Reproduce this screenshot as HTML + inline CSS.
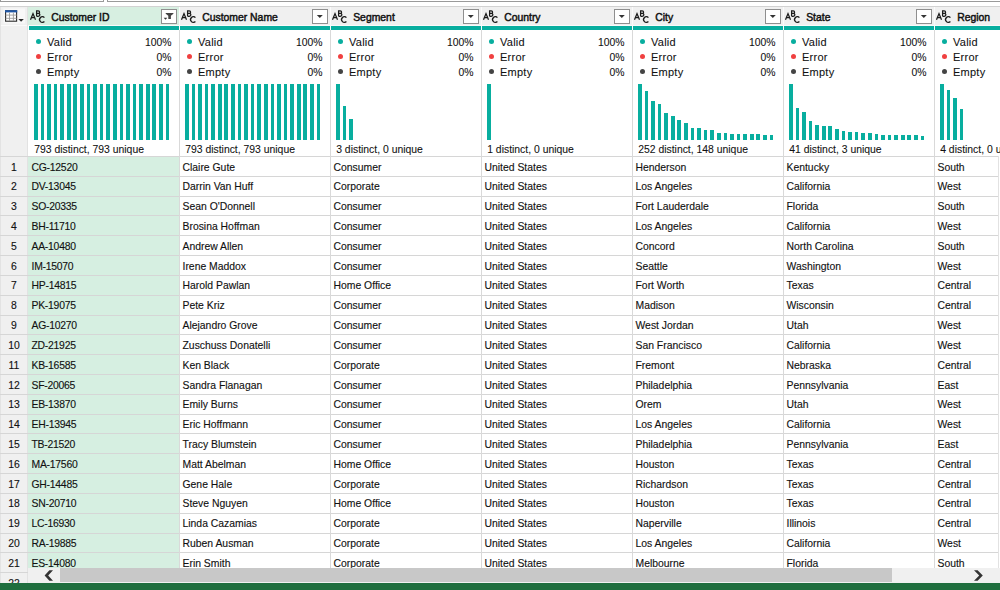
<!DOCTYPE html><html><head><meta charset="utf-8"><style>
*{margin:0;padding:0;box-sizing:border-box}
html,body{width:1000px;height:590px;overflow:hidden;background:#fff;font-family:"Liberation Sans",sans-serif;color:#111}
.a{position:absolute}
.t{position:absolute;white-space:nowrap;font-size:10.4px;line-height:12px;-webkit-text-stroke:0.12px #111}
.h{position:absolute;white-space:nowrap;font-size:10.4px;line-height:12px;color:#111;-webkit-text-stroke:0.45px #111}
.bar{position:absolute;background:#08ae9f}
.dot{position:absolute;width:5px;height:5px;border-radius:50%}
.dd{position:absolute;width:16px;height:15px;border:1px solid #8f8f8f;background:#fff}
</style></head><body>
<div class="a" style="left:0;top:0;width:1000px;height:7px;background:#fff"></div>
<div class="a" style="left:0;top:1px;width:104px;height:1px;background:#9a9a9a"></div>
<div class="a" style="left:103px;top:0;width:1px;height:2px;background:#9a9a9a"></div>
<div class="a" style="left:0;top:0;width:1px;height:2px;background:#9a9a9a"></div>
<div class="a" style="left:107px;top:1px;width:893px;height:1px;background:#9a9a9a"></div>
<div class="a" style="left:107px;top:0;width:1px;height:2px;background:#9a9a9a"></div>
<div class="a" style="left:0;top:6px;width:1000px;height:1px;background:#d2d2d2"></div>
<div class="a" style="left:0;top:7px;width:1000px;height:19px;background:#f0f0f0"></div>
<div class="a" style="left:28px;top:7px;width:151px;height:19px;background:#d7efe1"></div>
<div class="a" style="left:0;top:25px;width:1000px;height:1px;background:#fafafa"></div>
<div class="a" style="left:0;top:26px;width:28px;height:564px;background:#f0f0f0"></div>
<div class="a" style="left:27px;top:7px;width:1px;height:583px;background:#e2e2e2"></div>
<div class="a" style="left:0;top:7px;width:1px;height:583px;background:#e3e3e3"></div>
<svg class="a" style="left:0px;top:0px" width="28" height="26" viewBox="0 0 28 26">
<rect x="3.5" y="8.5" width="21.5" height="15" fill="#f8f8f8"/>
<rect x="5.6" y="10.8" width="11" height="10.4" fill="#fff" stroke="#2a2a2a" stroke-width="1.1"/>
<rect x="5" y="10.2" width="12.2" height="2.2" fill="#1f56a6"/>
<line x1="9.5" y1="12.6" x2="9.5" y2="21" stroke="#9a9a9a" stroke-width="0.9"/>
<line x1="13.4" y1="12.6" x2="13.4" y2="21" stroke="#9a9a9a" stroke-width="0.9"/>
<line x1="5.6" y1="15.1" x2="16.6" y2="15.1" stroke="#9a9a9a" stroke-width="0.9"/>
<line x1="5.6" y1="18.3" x2="16.6" y2="18.3" stroke="#9a9a9a" stroke-width="0.9"/>
<path d="M18.4 19 L23.8 19 L21.1 21.8 Z" fill="#2a2a2a"/>
</svg>
<div class="a" style="left:28px;top:156.00px;width:151px;height:434.00px;background:#d6efe1"></div>
<div class="a" style="left:0;top:156px;width:999px;height:1px;background:#d6d6d6"></div>
<div class="a" style="left:0;top:176px;width:999px;height:1px;background:#d6d6d6"></div>
<div class="a" style="left:0;top:196px;width:999px;height:1px;background:#d6d6d6"></div>
<div class="a" style="left:0;top:215px;width:999px;height:1px;background:#d6d6d6"></div>
<div class="a" style="left:0;top:235px;width:999px;height:1px;background:#d6d6d6"></div>
<div class="a" style="left:0;top:255px;width:999px;height:1px;background:#d6d6d6"></div>
<div class="a" style="left:0;top:275px;width:999px;height:1px;background:#d6d6d6"></div>
<div class="a" style="left:0;top:295px;width:999px;height:1px;background:#d6d6d6"></div>
<div class="a" style="left:0;top:315px;width:999px;height:1px;background:#d6d6d6"></div>
<div class="a" style="left:0;top:334px;width:999px;height:1px;background:#d6d6d6"></div>
<div class="a" style="left:0;top:354px;width:999px;height:1px;background:#d6d6d6"></div>
<div class="a" style="left:0;top:374px;width:999px;height:1px;background:#d6d6d6"></div>
<div class="a" style="left:0;top:394px;width:999px;height:1px;background:#d6d6d6"></div>
<div class="a" style="left:0;top:414px;width:999px;height:1px;background:#d6d6d6"></div>
<div class="a" style="left:0;top:433px;width:999px;height:1px;background:#d6d6d6"></div>
<div class="a" style="left:0;top:453px;width:999px;height:1px;background:#d6d6d6"></div>
<div class="a" style="left:0;top:473px;width:999px;height:1px;background:#d6d6d6"></div>
<div class="a" style="left:0;top:493px;width:999px;height:1px;background:#d6d6d6"></div>
<div class="a" style="left:0;top:513px;width:999px;height:1px;background:#d6d6d6"></div>
<div class="a" style="left:0;top:533px;width:999px;height:1px;background:#d6d6d6"></div>
<div class="a" style="left:0;top:552px;width:999px;height:1px;background:#d6d6d6"></div>
<div class="a" style="left:0;top:572px;width:999px;height:1px;background:#d6d6d6"></div>
<div class="a" style="left:0;top:592px;width:999px;height:1px;background:#d6d6d6"></div>
<div class="a" style="left:179px;top:30px;width:1px;height:560px;background:#d9d9d9"></div>
<div class="a" style="left:179px;top:7px;width:1px;height:23px;background:#fbfbfb"></div>
<div class="a" style="left:330px;top:30px;width:1px;height:560px;background:#d9d9d9"></div>
<div class="a" style="left:330px;top:7px;width:1px;height:23px;background:#fbfbfb"></div>
<div class="a" style="left:481px;top:30px;width:1px;height:560px;background:#d9d9d9"></div>
<div class="a" style="left:481px;top:7px;width:1px;height:23px;background:#fbfbfb"></div>
<div class="a" style="left:632px;top:30px;width:1px;height:560px;background:#d9d9d9"></div>
<div class="a" style="left:632px;top:7px;width:1px;height:23px;background:#fbfbfb"></div>
<div class="a" style="left:783px;top:30px;width:1px;height:560px;background:#d9d9d9"></div>
<div class="a" style="left:783px;top:7px;width:1px;height:23px;background:#fbfbfb"></div>
<div class="a" style="left:934px;top:30px;width:1px;height:560px;background:#d9d9d9"></div>
<div class="a" style="left:934px;top:7px;width:1px;height:23px;background:#fbfbfb"></div>
<div class="a" style="left:998px;top:156px;width:1px;height:434px;background:#e2e2e2"></div>
<div class="a" style="left:28.50px;top:26px;width:150.00px;height:4px;background:#08ae9f"></div>
<svg class="a" style="left:28.0px;top:0px" width="20" height="26" viewBox="0 0 20 26">
<path d="M2.5 19.8 L5 13.6 L7.5 19.8 M3.5 17.7 L6.5 17.7" fill="none" stroke="#1a1a1a" stroke-width="1.25"/>
<path d="M8.6 16.3 L8.6 10.9 L10.2 10.9 Q11.6 10.9 11.6 12.2 Q11.6 13.4 10.2 13.4 L8.6 13.4 M10.2 13.4 Q11.9 13.4 11.9 14.85 Q11.9 16.3 10.2 16.3 L8.6 16.3" fill="none" stroke="#1a1a1a" stroke-width="1.25"/>
<path d="M16.4 17.6 A2.75 2.9 0 1 0 16.4 21.5" fill="none" stroke="#1a1a1a" stroke-width="1.3"/>
</svg>
<div class="h" style="left:51.2px;top:11.5px">Customer ID</div>
<div class="dd" style="left:161.0px;top:9px"></div>
<svg class="a" style="left:161.0px;top:9px" width="16" height="15" viewBox="0 0 16 15">
<path d="M4.7 3.9 L12.4 3.9 L12.4 4.7 L9.9 6.7 L9.9 10 L7.3 10 L7.3 6.7 L4.7 4.7 Z" fill="#444"/>
<path d="M2.7 8.7 L6.3 8.7 L4.5 10.7 Z" fill="#333"/></svg>
<div class="dot" style="left:35.5px;top:39.2px;background:#08ae9f"></div>
<div class="t" style="left:47.0px;top:36.1px;font-size:11px;letter-spacing:0.25px;-webkit-text-stroke:0.08px #111">Valid</div>
<div class="t" style="left:71.5px;width:100px;text-align:right;top:37.2px;-webkit-text-stroke:0.08px #111">100%</div>
<div class="dot" style="left:35.5px;top:54.2px;background:#f04040"></div>
<div class="t" style="left:47.0px;top:51.1px;font-size:11px;letter-spacing:0.25px;-webkit-text-stroke:0.08px #111">Error</div>
<div class="t" style="left:71.5px;width:100px;text-align:right;top:52.2px;-webkit-text-stroke:0.08px #111">0%</div>
<div class="dot" style="left:35.5px;top:69.2px;background:#444"></div>
<div class="t" style="left:47.0px;top:66.1px;font-size:11px;letter-spacing:0.25px;-webkit-text-stroke:0.08px #111">Empty</div>
<div class="t" style="left:71.5px;width:100px;text-align:right;top:67.2px;-webkit-text-stroke:0.08px #111">0%</div>
<div class="bar" style="left:34.00px;top:84.00px;width:3.7px;height:56.00px"></div>
<div class="bar" style="left:40.58px;top:84.00px;width:3.7px;height:56.00px"></div>
<div class="bar" style="left:47.16px;top:84.00px;width:3.7px;height:56.00px"></div>
<div class="bar" style="left:53.74px;top:84.00px;width:3.7px;height:56.00px"></div>
<div class="bar" style="left:60.32px;top:84.00px;width:3.7px;height:56.00px"></div>
<div class="bar" style="left:66.90px;top:84.00px;width:3.7px;height:56.00px"></div>
<div class="bar" style="left:73.48px;top:84.00px;width:3.7px;height:56.00px"></div>
<div class="bar" style="left:80.06px;top:84.00px;width:3.7px;height:56.00px"></div>
<div class="bar" style="left:86.64px;top:84.00px;width:3.7px;height:56.00px"></div>
<div class="bar" style="left:93.22px;top:84.00px;width:3.7px;height:56.00px"></div>
<div class="bar" style="left:99.80px;top:84.00px;width:3.7px;height:56.00px"></div>
<div class="bar" style="left:106.38px;top:84.00px;width:3.7px;height:56.00px"></div>
<div class="bar" style="left:112.96px;top:84.00px;width:3.7px;height:56.00px"></div>
<div class="bar" style="left:119.54px;top:84.00px;width:3.7px;height:56.00px"></div>
<div class="bar" style="left:126.12px;top:84.00px;width:3.7px;height:56.00px"></div>
<div class="bar" style="left:132.70px;top:84.00px;width:3.7px;height:56.00px"></div>
<div class="bar" style="left:139.28px;top:84.00px;width:3.7px;height:56.00px"></div>
<div class="bar" style="left:145.86px;top:84.00px;width:3.7px;height:56.00px"></div>
<div class="bar" style="left:152.44px;top:84.00px;width:3.7px;height:56.00px"></div>
<div class="bar" style="left:159.02px;top:84.00px;width:3.7px;height:56.00px"></div>
<div class="bar" style="left:165.60px;top:84.00px;width:3.7px;height:56.00px"></div>
<div class="t" style="left:34.2px;top:143.5px;-webkit-text-stroke:0.08px #111">793 distinct, 793 unique</div>
<div class="t" style="left:31.5px;top:161.50px;letter-spacing:-0.25px">CG-12520</div>
<div class="t" style="left:31.5px;top:181.32px;letter-spacing:-0.25px">DV-13045</div>
<div class="t" style="left:31.5px;top:201.14px;letter-spacing:-0.25px">SO-20335</div>
<div class="t" style="left:31.5px;top:220.96px;letter-spacing:-0.25px">BH-11710</div>
<div class="t" style="left:31.5px;top:240.78px;letter-spacing:-0.25px">AA-10480</div>
<div class="t" style="left:31.5px;top:260.60px;letter-spacing:-0.25px">IM-15070</div>
<div class="t" style="left:31.5px;top:280.42px;letter-spacing:-0.25px">HP-14815</div>
<div class="t" style="left:31.5px;top:300.24px;letter-spacing:-0.25px">PK-19075</div>
<div class="t" style="left:31.5px;top:320.06px;letter-spacing:-0.25px">AG-10270</div>
<div class="t" style="left:31.5px;top:339.88px;letter-spacing:-0.25px">ZD-21925</div>
<div class="t" style="left:31.5px;top:359.70px;letter-spacing:-0.25px">KB-16585</div>
<div class="t" style="left:31.5px;top:379.52px;letter-spacing:-0.25px">SF-20065</div>
<div class="t" style="left:31.5px;top:399.34px;letter-spacing:-0.25px">EB-13870</div>
<div class="t" style="left:31.5px;top:419.16px;letter-spacing:-0.25px">EH-13945</div>
<div class="t" style="left:31.5px;top:438.98px;letter-spacing:-0.25px">TB-21520</div>
<div class="t" style="left:31.5px;top:458.80px;letter-spacing:-0.25px">MA-17560</div>
<div class="t" style="left:31.5px;top:478.62px;letter-spacing:-0.25px">GH-14485</div>
<div class="t" style="left:31.5px;top:498.44px;letter-spacing:-0.25px">SN-20710</div>
<div class="t" style="left:31.5px;top:518.26px;letter-spacing:-0.25px">LC-16930</div>
<div class="t" style="left:31.5px;top:538.08px;letter-spacing:-0.25px">RA-19885</div>
<div class="t" style="left:31.5px;top:557.90px;letter-spacing:-0.25px">ES-14080</div>
<div class="a" style="left:179.50px;top:26px;width:150.00px;height:4px;background:#08ae9f"></div>
<svg class="a" style="left:179.0px;top:0px" width="20" height="26" viewBox="0 0 20 26">
<path d="M2.5 19.8 L5 13.6 L7.5 19.8 M3.5 17.7 L6.5 17.7" fill="none" stroke="#1a1a1a" stroke-width="1.25"/>
<path d="M8.6 16.3 L8.6 10.9 L10.2 10.9 Q11.6 10.9 11.6 12.2 Q11.6 13.4 10.2 13.4 L8.6 13.4 M10.2 13.4 Q11.9 13.4 11.9 14.85 Q11.9 16.3 10.2 16.3 L8.6 16.3" fill="none" stroke="#1a1a1a" stroke-width="1.25"/>
<path d="M16.4 17.6 A2.75 2.9 0 1 0 16.4 21.5" fill="none" stroke="#1a1a1a" stroke-width="1.3"/>
</svg>
<div class="h" style="left:202.2px;top:11.5px">Customer Name</div>
<div class="dd" style="left:312.0px;top:9px"></div>
<svg class="a" style="left:312.0px;top:9px" width="16" height="15" viewBox="0 0 16 15">
<path d="M4.8 6 L10.8 6 L7.8 9 Z" fill="#333"/></svg>
<div class="dot" style="left:186.5px;top:39.2px;background:#08ae9f"></div>
<div class="t" style="left:198.0px;top:36.1px;font-size:11px;letter-spacing:0.25px;-webkit-text-stroke:0.08px #111">Valid</div>
<div class="t" style="left:222.5px;width:100px;text-align:right;top:37.2px;-webkit-text-stroke:0.08px #111">100%</div>
<div class="dot" style="left:186.5px;top:54.2px;background:#f04040"></div>
<div class="t" style="left:198.0px;top:51.1px;font-size:11px;letter-spacing:0.25px;-webkit-text-stroke:0.08px #111">Error</div>
<div class="t" style="left:222.5px;width:100px;text-align:right;top:52.2px;-webkit-text-stroke:0.08px #111">0%</div>
<div class="dot" style="left:186.5px;top:69.2px;background:#444"></div>
<div class="t" style="left:198.0px;top:66.1px;font-size:11px;letter-spacing:0.25px;-webkit-text-stroke:0.08px #111">Empty</div>
<div class="t" style="left:222.5px;width:100px;text-align:right;top:67.2px;-webkit-text-stroke:0.08px #111">0%</div>
<div class="bar" style="left:185.00px;top:84.00px;width:3.7px;height:56.00px"></div>
<div class="bar" style="left:191.58px;top:84.00px;width:3.7px;height:56.00px"></div>
<div class="bar" style="left:198.16px;top:84.00px;width:3.7px;height:56.00px"></div>
<div class="bar" style="left:204.74px;top:84.00px;width:3.7px;height:56.00px"></div>
<div class="bar" style="left:211.32px;top:84.00px;width:3.7px;height:56.00px"></div>
<div class="bar" style="left:217.90px;top:84.00px;width:3.7px;height:56.00px"></div>
<div class="bar" style="left:224.48px;top:84.00px;width:3.7px;height:56.00px"></div>
<div class="bar" style="left:231.06px;top:84.00px;width:3.7px;height:56.00px"></div>
<div class="bar" style="left:237.64px;top:84.00px;width:3.7px;height:56.00px"></div>
<div class="bar" style="left:244.22px;top:84.00px;width:3.7px;height:56.00px"></div>
<div class="bar" style="left:250.80px;top:84.00px;width:3.7px;height:56.00px"></div>
<div class="bar" style="left:257.38px;top:84.00px;width:3.7px;height:56.00px"></div>
<div class="bar" style="left:263.96px;top:84.00px;width:3.7px;height:56.00px"></div>
<div class="bar" style="left:270.54px;top:84.00px;width:3.7px;height:56.00px"></div>
<div class="bar" style="left:277.12px;top:84.00px;width:3.7px;height:56.00px"></div>
<div class="bar" style="left:283.70px;top:84.00px;width:3.7px;height:56.00px"></div>
<div class="bar" style="left:290.28px;top:84.00px;width:3.7px;height:56.00px"></div>
<div class="bar" style="left:296.86px;top:84.00px;width:3.7px;height:56.00px"></div>
<div class="bar" style="left:303.44px;top:84.00px;width:3.7px;height:56.00px"></div>
<div class="bar" style="left:310.02px;top:84.00px;width:3.7px;height:56.00px"></div>
<div class="bar" style="left:316.60px;top:84.00px;width:3.7px;height:56.00px"></div>
<div class="t" style="left:185.2px;top:143.5px;-webkit-text-stroke:0.08px #111">793 distinct, 793 unique</div>
<div class="t" style="left:182.5px;top:161.50px">Claire Gute</div>
<div class="t" style="left:182.5px;top:181.32px">Darrin Van Huff</div>
<div class="t" style="left:182.5px;top:201.14px">Sean O'Donnell</div>
<div class="t" style="left:182.5px;top:220.96px">Brosina Hoffman</div>
<div class="t" style="left:182.5px;top:240.78px">Andrew Allen</div>
<div class="t" style="left:182.5px;top:260.60px">Irene Maddox</div>
<div class="t" style="left:182.5px;top:280.42px">Harold Pawlan</div>
<div class="t" style="left:182.5px;top:300.24px">Pete Kriz</div>
<div class="t" style="left:182.5px;top:320.06px">Alejandro Grove</div>
<div class="t" style="left:182.5px;top:339.88px">Zuschuss Donatelli</div>
<div class="t" style="left:182.5px;top:359.70px">Ken Black</div>
<div class="t" style="left:182.5px;top:379.52px">Sandra Flanagan</div>
<div class="t" style="left:182.5px;top:399.34px">Emily Burns</div>
<div class="t" style="left:182.5px;top:419.16px">Eric Hoffmann</div>
<div class="t" style="left:182.5px;top:438.98px">Tracy Blumstein</div>
<div class="t" style="left:182.5px;top:458.80px">Matt Abelman</div>
<div class="t" style="left:182.5px;top:478.62px">Gene Hale</div>
<div class="t" style="left:182.5px;top:498.44px">Steve Nguyen</div>
<div class="t" style="left:182.5px;top:518.26px">Linda Cazamias</div>
<div class="t" style="left:182.5px;top:538.08px">Ruben Ausman</div>
<div class="t" style="left:182.5px;top:557.90px">Erin Smith</div>
<div class="a" style="left:330.50px;top:26px;width:150.00px;height:4px;background:#08ae9f"></div>
<svg class="a" style="left:330.0px;top:0px" width="20" height="26" viewBox="0 0 20 26">
<path d="M2.5 19.8 L5 13.6 L7.5 19.8 M3.5 17.7 L6.5 17.7" fill="none" stroke="#1a1a1a" stroke-width="1.25"/>
<path d="M8.6 16.3 L8.6 10.9 L10.2 10.9 Q11.6 10.9 11.6 12.2 Q11.6 13.4 10.2 13.4 L8.6 13.4 M10.2 13.4 Q11.9 13.4 11.9 14.85 Q11.9 16.3 10.2 16.3 L8.6 16.3" fill="none" stroke="#1a1a1a" stroke-width="1.25"/>
<path d="M16.4 17.6 A2.75 2.9 0 1 0 16.4 21.5" fill="none" stroke="#1a1a1a" stroke-width="1.3"/>
</svg>
<div class="h" style="left:353.2px;top:11.5px">Segment</div>
<div class="dd" style="left:463.0px;top:9px"></div>
<svg class="a" style="left:463.0px;top:9px" width="16" height="15" viewBox="0 0 16 15">
<path d="M4.8 6 L10.8 6 L7.8 9 Z" fill="#333"/></svg>
<div class="dot" style="left:337.5px;top:39.2px;background:#08ae9f"></div>
<div class="t" style="left:349.0px;top:36.1px;font-size:11px;letter-spacing:0.25px;-webkit-text-stroke:0.08px #111">Valid</div>
<div class="t" style="left:373.5px;width:100px;text-align:right;top:37.2px;-webkit-text-stroke:0.08px #111">100%</div>
<div class="dot" style="left:337.5px;top:54.2px;background:#f04040"></div>
<div class="t" style="left:349.0px;top:51.1px;font-size:11px;letter-spacing:0.25px;-webkit-text-stroke:0.08px #111">Error</div>
<div class="t" style="left:373.5px;width:100px;text-align:right;top:52.2px;-webkit-text-stroke:0.08px #111">0%</div>
<div class="dot" style="left:337.5px;top:69.2px;background:#444"></div>
<div class="t" style="left:349.0px;top:66.1px;font-size:11px;letter-spacing:0.25px;-webkit-text-stroke:0.08px #111">Empty</div>
<div class="t" style="left:373.5px;width:100px;text-align:right;top:67.2px;-webkit-text-stroke:0.08px #111">0%</div>
<div class="bar" style="left:336.00px;top:84.00px;width:3.7px;height:56.00px"></div>
<div class="bar" style="left:342.58px;top:106.00px;width:3.7px;height:34.00px"></div>
<div class="bar" style="left:349.16px;top:119.00px;width:3.7px;height:21.00px"></div>
<div class="t" style="left:336.2px;top:143.5px;-webkit-text-stroke:0.08px #111">3 distinct, 0 unique</div>
<div class="t" style="left:333.5px;top:161.50px">Consumer</div>
<div class="t" style="left:333.5px;top:181.32px">Corporate</div>
<div class="t" style="left:333.5px;top:201.14px">Consumer</div>
<div class="t" style="left:333.5px;top:220.96px">Consumer</div>
<div class="t" style="left:333.5px;top:240.78px">Consumer</div>
<div class="t" style="left:333.5px;top:260.60px">Consumer</div>
<div class="t" style="left:333.5px;top:280.42px">Home Office</div>
<div class="t" style="left:333.5px;top:300.24px">Consumer</div>
<div class="t" style="left:333.5px;top:320.06px">Consumer</div>
<div class="t" style="left:333.5px;top:339.88px">Consumer</div>
<div class="t" style="left:333.5px;top:359.70px">Corporate</div>
<div class="t" style="left:333.5px;top:379.52px">Consumer</div>
<div class="t" style="left:333.5px;top:399.34px">Consumer</div>
<div class="t" style="left:333.5px;top:419.16px">Consumer</div>
<div class="t" style="left:333.5px;top:438.98px">Consumer</div>
<div class="t" style="left:333.5px;top:458.80px">Home Office</div>
<div class="t" style="left:333.5px;top:478.62px">Corporate</div>
<div class="t" style="left:333.5px;top:498.44px">Home Office</div>
<div class="t" style="left:333.5px;top:518.26px">Corporate</div>
<div class="t" style="left:333.5px;top:538.08px">Corporate</div>
<div class="t" style="left:333.5px;top:557.90px">Corporate</div>
<div class="a" style="left:481.50px;top:26px;width:150.00px;height:4px;background:#08ae9f"></div>
<svg class="a" style="left:481.0px;top:0px" width="20" height="26" viewBox="0 0 20 26">
<path d="M2.5 19.8 L5 13.6 L7.5 19.8 M3.5 17.7 L6.5 17.7" fill="none" stroke="#1a1a1a" stroke-width="1.25"/>
<path d="M8.6 16.3 L8.6 10.9 L10.2 10.9 Q11.6 10.9 11.6 12.2 Q11.6 13.4 10.2 13.4 L8.6 13.4 M10.2 13.4 Q11.9 13.4 11.9 14.85 Q11.9 16.3 10.2 16.3 L8.6 16.3" fill="none" stroke="#1a1a1a" stroke-width="1.25"/>
<path d="M16.4 17.6 A2.75 2.9 0 1 0 16.4 21.5" fill="none" stroke="#1a1a1a" stroke-width="1.3"/>
</svg>
<div class="h" style="left:504.2px;top:11.5px">Country</div>
<div class="dd" style="left:614.0px;top:9px"></div>
<svg class="a" style="left:614.0px;top:9px" width="16" height="15" viewBox="0 0 16 15">
<path d="M4.8 6 L10.8 6 L7.8 9 Z" fill="#333"/></svg>
<div class="dot" style="left:488.5px;top:39.2px;background:#08ae9f"></div>
<div class="t" style="left:500.0px;top:36.1px;font-size:11px;letter-spacing:0.25px;-webkit-text-stroke:0.08px #111">Valid</div>
<div class="t" style="left:524.5px;width:100px;text-align:right;top:37.2px;-webkit-text-stroke:0.08px #111">100%</div>
<div class="dot" style="left:488.5px;top:54.2px;background:#f04040"></div>
<div class="t" style="left:500.0px;top:51.1px;font-size:11px;letter-spacing:0.25px;-webkit-text-stroke:0.08px #111">Error</div>
<div class="t" style="left:524.5px;width:100px;text-align:right;top:52.2px;-webkit-text-stroke:0.08px #111">0%</div>
<div class="dot" style="left:488.5px;top:69.2px;background:#444"></div>
<div class="t" style="left:500.0px;top:66.1px;font-size:11px;letter-spacing:0.25px;-webkit-text-stroke:0.08px #111">Empty</div>
<div class="t" style="left:524.5px;width:100px;text-align:right;top:67.2px;-webkit-text-stroke:0.08px #111">0%</div>
<div class="bar" style="left:487.00px;top:84.00px;width:3.7px;height:56.00px"></div>
<div class="t" style="left:487.2px;top:143.5px;-webkit-text-stroke:0.08px #111">1 distinct, 0 unique</div>
<div class="t" style="left:484.5px;top:161.50px">United States</div>
<div class="t" style="left:484.5px;top:181.32px">United States</div>
<div class="t" style="left:484.5px;top:201.14px">United States</div>
<div class="t" style="left:484.5px;top:220.96px">United States</div>
<div class="t" style="left:484.5px;top:240.78px">United States</div>
<div class="t" style="left:484.5px;top:260.60px">United States</div>
<div class="t" style="left:484.5px;top:280.42px">United States</div>
<div class="t" style="left:484.5px;top:300.24px">United States</div>
<div class="t" style="left:484.5px;top:320.06px">United States</div>
<div class="t" style="left:484.5px;top:339.88px">United States</div>
<div class="t" style="left:484.5px;top:359.70px">United States</div>
<div class="t" style="left:484.5px;top:379.52px">United States</div>
<div class="t" style="left:484.5px;top:399.34px">United States</div>
<div class="t" style="left:484.5px;top:419.16px">United States</div>
<div class="t" style="left:484.5px;top:438.98px">United States</div>
<div class="t" style="left:484.5px;top:458.80px">United States</div>
<div class="t" style="left:484.5px;top:478.62px">United States</div>
<div class="t" style="left:484.5px;top:498.44px">United States</div>
<div class="t" style="left:484.5px;top:518.26px">United States</div>
<div class="t" style="left:484.5px;top:538.08px">United States</div>
<div class="t" style="left:484.5px;top:557.90px">United States</div>
<div class="a" style="left:632.50px;top:26px;width:150.00px;height:4px;background:#08ae9f"></div>
<svg class="a" style="left:632.0px;top:0px" width="20" height="26" viewBox="0 0 20 26">
<path d="M2.5 19.8 L5 13.6 L7.5 19.8 M3.5 17.7 L6.5 17.7" fill="none" stroke="#1a1a1a" stroke-width="1.25"/>
<path d="M8.6 16.3 L8.6 10.9 L10.2 10.9 Q11.6 10.9 11.6 12.2 Q11.6 13.4 10.2 13.4 L8.6 13.4 M10.2 13.4 Q11.9 13.4 11.9 14.85 Q11.9 16.3 10.2 16.3 L8.6 16.3" fill="none" stroke="#1a1a1a" stroke-width="1.25"/>
<path d="M16.4 17.6 A2.75 2.9 0 1 0 16.4 21.5" fill="none" stroke="#1a1a1a" stroke-width="1.3"/>
</svg>
<div class="h" style="left:655.2px;top:11.5px">City</div>
<div class="dd" style="left:765.0px;top:9px"></div>
<svg class="a" style="left:765.0px;top:9px" width="16" height="15" viewBox="0 0 16 15">
<path d="M4.8 6 L10.8 6 L7.8 9 Z" fill="#333"/></svg>
<div class="dot" style="left:639.5px;top:39.2px;background:#08ae9f"></div>
<div class="t" style="left:651.0px;top:36.1px;font-size:11px;letter-spacing:0.25px;-webkit-text-stroke:0.08px #111">Valid</div>
<div class="t" style="left:675.5px;width:100px;text-align:right;top:37.2px;-webkit-text-stroke:0.08px #111">100%</div>
<div class="dot" style="left:639.5px;top:54.2px;background:#f04040"></div>
<div class="t" style="left:651.0px;top:51.1px;font-size:11px;letter-spacing:0.25px;-webkit-text-stroke:0.08px #111">Error</div>
<div class="t" style="left:675.5px;width:100px;text-align:right;top:52.2px;-webkit-text-stroke:0.08px #111">0%</div>
<div class="dot" style="left:639.5px;top:69.2px;background:#444"></div>
<div class="t" style="left:651.0px;top:66.1px;font-size:11px;letter-spacing:0.25px;-webkit-text-stroke:0.08px #111">Empty</div>
<div class="t" style="left:675.5px;width:100px;text-align:right;top:67.2px;-webkit-text-stroke:0.08px #111">0%</div>
<div class="bar" style="left:638.00px;top:84.00px;width:3.7px;height:56.00px"></div>
<div class="bar" style="left:644.58px;top:91.00px;width:3.7px;height:49.00px"></div>
<div class="bar" style="left:651.16px;top:101.00px;width:3.7px;height:39.00px"></div>
<div class="bar" style="left:657.74px;top:104.00px;width:3.7px;height:36.00px"></div>
<div class="bar" style="left:664.32px;top:113.00px;width:3.7px;height:27.00px"></div>
<div class="bar" style="left:670.90px;top:116.00px;width:3.7px;height:24.00px"></div>
<div class="bar" style="left:677.48px;top:120.00px;width:3.7px;height:20.00px"></div>
<div class="bar" style="left:684.06px;top:123.00px;width:3.7px;height:17.00px"></div>
<div class="bar" style="left:690.64px;top:128.00px;width:3.7px;height:12.00px"></div>
<div class="bar" style="left:697.22px;top:128.00px;width:3.7px;height:12.00px"></div>
<div class="bar" style="left:703.80px;top:130.00px;width:3.7px;height:10.00px"></div>
<div class="bar" style="left:710.38px;top:130.00px;width:3.7px;height:10.00px"></div>
<div class="bar" style="left:716.96px;top:133.00px;width:3.7px;height:7.00px"></div>
<div class="bar" style="left:723.54px;top:133.00px;width:3.7px;height:7.00px"></div>
<div class="bar" style="left:730.12px;top:134.00px;width:3.7px;height:6.00px"></div>
<div class="bar" style="left:736.70px;top:134.00px;width:3.7px;height:6.00px"></div>
<div class="bar" style="left:743.28px;top:134.00px;width:3.7px;height:6.00px"></div>
<div class="bar" style="left:749.86px;top:134.00px;width:3.7px;height:6.00px"></div>
<div class="bar" style="left:756.44px;top:134.00px;width:3.7px;height:6.00px"></div>
<div class="bar" style="left:763.02px;top:134.50px;width:3.7px;height:5.50px"></div>
<div class="bar" style="left:769.60px;top:134.50px;width:3.7px;height:5.50px"></div>
<div class="t" style="left:638.2px;top:143.5px;-webkit-text-stroke:0.08px #111">252 distinct, 148 unique</div>
<div class="t" style="left:635.5px;top:161.50px">Henderson</div>
<div class="t" style="left:635.5px;top:181.32px">Los Angeles</div>
<div class="t" style="left:635.5px;top:201.14px">Fort Lauderdale</div>
<div class="t" style="left:635.5px;top:220.96px">Los Angeles</div>
<div class="t" style="left:635.5px;top:240.78px">Concord</div>
<div class="t" style="left:635.5px;top:260.60px">Seattle</div>
<div class="t" style="left:635.5px;top:280.42px">Fort Worth</div>
<div class="t" style="left:635.5px;top:300.24px">Madison</div>
<div class="t" style="left:635.5px;top:320.06px">West Jordan</div>
<div class="t" style="left:635.5px;top:339.88px">San Francisco</div>
<div class="t" style="left:635.5px;top:359.70px">Fremont</div>
<div class="t" style="left:635.5px;top:379.52px">Philadelphia</div>
<div class="t" style="left:635.5px;top:399.34px">Orem</div>
<div class="t" style="left:635.5px;top:419.16px">Los Angeles</div>
<div class="t" style="left:635.5px;top:438.98px">Philadelphia</div>
<div class="t" style="left:635.5px;top:458.80px">Houston</div>
<div class="t" style="left:635.5px;top:478.62px">Richardson</div>
<div class="t" style="left:635.5px;top:498.44px">Houston</div>
<div class="t" style="left:635.5px;top:518.26px">Naperville</div>
<div class="t" style="left:635.5px;top:538.08px">Los Angeles</div>
<div class="t" style="left:635.5px;top:557.90px">Melbourne</div>
<div class="a" style="left:783.50px;top:26px;width:150.00px;height:4px;background:#08ae9f"></div>
<svg class="a" style="left:783.0px;top:0px" width="20" height="26" viewBox="0 0 20 26">
<path d="M2.5 19.8 L5 13.6 L7.5 19.8 M3.5 17.7 L6.5 17.7" fill="none" stroke="#1a1a1a" stroke-width="1.25"/>
<path d="M8.6 16.3 L8.6 10.9 L10.2 10.9 Q11.6 10.9 11.6 12.2 Q11.6 13.4 10.2 13.4 L8.6 13.4 M10.2 13.4 Q11.9 13.4 11.9 14.85 Q11.9 16.3 10.2 16.3 L8.6 16.3" fill="none" stroke="#1a1a1a" stroke-width="1.25"/>
<path d="M16.4 17.6 A2.75 2.9 0 1 0 16.4 21.5" fill="none" stroke="#1a1a1a" stroke-width="1.3"/>
</svg>
<div class="h" style="left:806.2px;top:11.5px">State</div>
<div class="dd" style="left:916.0px;top:9px"></div>
<svg class="a" style="left:916.0px;top:9px" width="16" height="15" viewBox="0 0 16 15">
<path d="M4.8 6 L10.8 6 L7.8 9 Z" fill="#333"/></svg>
<div class="dot" style="left:790.5px;top:39.2px;background:#08ae9f"></div>
<div class="t" style="left:802.0px;top:36.1px;font-size:11px;letter-spacing:0.25px;-webkit-text-stroke:0.08px #111">Valid</div>
<div class="t" style="left:826.5px;width:100px;text-align:right;top:37.2px;-webkit-text-stroke:0.08px #111">100%</div>
<div class="dot" style="left:790.5px;top:54.2px;background:#f04040"></div>
<div class="t" style="left:802.0px;top:51.1px;font-size:11px;letter-spacing:0.25px;-webkit-text-stroke:0.08px #111">Error</div>
<div class="t" style="left:826.5px;width:100px;text-align:right;top:52.2px;-webkit-text-stroke:0.08px #111">0%</div>
<div class="dot" style="left:790.5px;top:69.2px;background:#444"></div>
<div class="t" style="left:802.0px;top:66.1px;font-size:11px;letter-spacing:0.25px;-webkit-text-stroke:0.08px #111">Empty</div>
<div class="t" style="left:826.5px;width:100px;text-align:right;top:67.2px;-webkit-text-stroke:0.08px #111">0%</div>
<div class="bar" style="left:789.00px;top:84.00px;width:3.7px;height:56.00px"></div>
<div class="bar" style="left:795.58px;top:108.00px;width:3.7px;height:32.00px"></div>
<div class="bar" style="left:802.16px;top:112.00px;width:3.7px;height:28.00px"></div>
<div class="bar" style="left:808.74px;top:121.00px;width:3.7px;height:19.00px"></div>
<div class="bar" style="left:815.32px;top:125.00px;width:3.7px;height:15.00px"></div>
<div class="bar" style="left:821.90px;top:125.50px;width:3.7px;height:14.50px"></div>
<div class="bar" style="left:828.48px;top:125.50px;width:3.7px;height:14.50px"></div>
<div class="bar" style="left:835.06px;top:128.50px;width:3.7px;height:11.50px"></div>
<div class="bar" style="left:841.64px;top:131.00px;width:3.7px;height:9.00px"></div>
<div class="bar" style="left:848.22px;top:131.50px;width:3.7px;height:8.50px"></div>
<div class="bar" style="left:854.80px;top:131.50px;width:3.7px;height:8.50px"></div>
<div class="bar" style="left:861.38px;top:133.00px;width:3.7px;height:7.00px"></div>
<div class="bar" style="left:867.96px;top:133.00px;width:3.7px;height:7.00px"></div>
<div class="bar" style="left:874.54px;top:134.00px;width:3.7px;height:6.00px"></div>
<div class="bar" style="left:881.12px;top:134.50px;width:3.7px;height:5.50px"></div>
<div class="bar" style="left:887.70px;top:134.50px;width:3.7px;height:5.50px"></div>
<div class="bar" style="left:894.28px;top:134.50px;width:3.7px;height:5.50px"></div>
<div class="bar" style="left:900.86px;top:134.50px;width:3.7px;height:5.50px"></div>
<div class="bar" style="left:907.44px;top:135.00px;width:3.7px;height:5.00px"></div>
<div class="bar" style="left:914.02px;top:135.00px;width:3.7px;height:5.00px"></div>
<div class="bar" style="left:920.60px;top:136.00px;width:3.7px;height:4.00px"></div>
<div class="t" style="left:789.2px;top:143.5px;-webkit-text-stroke:0.08px #111">41 distinct, 3 unique</div>
<div class="t" style="left:786.5px;top:161.50px">Kentucky</div>
<div class="t" style="left:786.5px;top:181.32px">California</div>
<div class="t" style="left:786.5px;top:201.14px">Florida</div>
<div class="t" style="left:786.5px;top:220.96px">California</div>
<div class="t" style="left:786.5px;top:240.78px">North Carolina</div>
<div class="t" style="left:786.5px;top:260.60px">Washington</div>
<div class="t" style="left:786.5px;top:280.42px">Texas</div>
<div class="t" style="left:786.5px;top:300.24px">Wisconsin</div>
<div class="t" style="left:786.5px;top:320.06px">Utah</div>
<div class="t" style="left:786.5px;top:339.88px">California</div>
<div class="t" style="left:786.5px;top:359.70px">Nebraska</div>
<div class="t" style="left:786.5px;top:379.52px">Pennsylvania</div>
<div class="t" style="left:786.5px;top:399.34px">Utah</div>
<div class="t" style="left:786.5px;top:419.16px">California</div>
<div class="t" style="left:786.5px;top:438.98px">Pennsylvania</div>
<div class="t" style="left:786.5px;top:458.80px">Texas</div>
<div class="t" style="left:786.5px;top:478.62px">Texas</div>
<div class="t" style="left:786.5px;top:498.44px">Texas</div>
<div class="t" style="left:786.5px;top:518.26px">Illinois</div>
<div class="t" style="left:786.5px;top:538.08px">California</div>
<div class="t" style="left:786.5px;top:557.90px">Florida</div>
<div class="a" style="left:934.50px;top:26px;width:66.00px;height:4px;background:#08ae9f"></div>
<svg class="a" style="left:934.0px;top:0px" width="20" height="26" viewBox="0 0 20 26">
<path d="M2.5 19.8 L5 13.6 L7.5 19.8 M3.5 17.7 L6.5 17.7" fill="none" stroke="#1a1a1a" stroke-width="1.25"/>
<path d="M8.6 16.3 L8.6 10.9 L10.2 10.9 Q11.6 10.9 11.6 12.2 Q11.6 13.4 10.2 13.4 L8.6 13.4 M10.2 13.4 Q11.9 13.4 11.9 14.85 Q11.9 16.3 10.2 16.3 L8.6 16.3" fill="none" stroke="#1a1a1a" stroke-width="1.25"/>
<path d="M16.4 17.6 A2.75 2.9 0 1 0 16.4 21.5" fill="none" stroke="#1a1a1a" stroke-width="1.3"/>
</svg>
<div class="h" style="left:957.2px;top:11.5px">Region</div>
<div class="dot" style="left:941.5px;top:39.2px;background:#08ae9f"></div>
<div class="t" style="left:953.0px;top:36.1px;font-size:11px;letter-spacing:0.25px;-webkit-text-stroke:0.08px #111">Valid</div>
<div class="t" style="left:977.5px;width:100px;text-align:right;top:37.2px;-webkit-text-stroke:0.08px #111">100%</div>
<div class="dot" style="left:941.5px;top:54.2px;background:#f04040"></div>
<div class="t" style="left:953.0px;top:51.1px;font-size:11px;letter-spacing:0.25px;-webkit-text-stroke:0.08px #111">Error</div>
<div class="t" style="left:977.5px;width:100px;text-align:right;top:52.2px;-webkit-text-stroke:0.08px #111">0%</div>
<div class="dot" style="left:941.5px;top:69.2px;background:#444"></div>
<div class="t" style="left:953.0px;top:66.1px;font-size:11px;letter-spacing:0.25px;-webkit-text-stroke:0.08px #111">Empty</div>
<div class="t" style="left:977.5px;width:100px;text-align:right;top:67.2px;-webkit-text-stroke:0.08px #111">0%</div>
<div class="bar" style="left:940.00px;top:84.00px;width:3.7px;height:56.00px"></div>
<div class="bar" style="left:946.58px;top:90.00px;width:3.7px;height:50.00px"></div>
<div class="bar" style="left:953.16px;top:98.00px;width:3.7px;height:42.00px"></div>
<div class="bar" style="left:959.74px;top:109.00px;width:3.7px;height:31.00px"></div>
<div class="t" style="left:940.2px;top:143.5px;-webkit-text-stroke:0.08px #111">4 distinct, 0 unique</div>
<div class="t" style="left:937.5px;top:161.50px">South</div>
<div class="t" style="left:937.5px;top:181.32px">West</div>
<div class="t" style="left:937.5px;top:201.14px">South</div>
<div class="t" style="left:937.5px;top:220.96px">West</div>
<div class="t" style="left:937.5px;top:240.78px">South</div>
<div class="t" style="left:937.5px;top:260.60px">West</div>
<div class="t" style="left:937.5px;top:280.42px">Central</div>
<div class="t" style="left:937.5px;top:300.24px">Central</div>
<div class="t" style="left:937.5px;top:320.06px">West</div>
<div class="t" style="left:937.5px;top:339.88px">West</div>
<div class="t" style="left:937.5px;top:359.70px">Central</div>
<div class="t" style="left:937.5px;top:379.52px">East</div>
<div class="t" style="left:937.5px;top:399.34px">West</div>
<div class="t" style="left:937.5px;top:419.16px">West</div>
<div class="t" style="left:937.5px;top:438.98px">East</div>
<div class="t" style="left:937.5px;top:458.80px">Central</div>
<div class="t" style="left:937.5px;top:478.62px">Central</div>
<div class="t" style="left:937.5px;top:498.44px">Central</div>
<div class="t" style="left:937.5px;top:518.26px">Central</div>
<div class="t" style="left:937.5px;top:538.08px">West</div>
<div class="t" style="left:937.5px;top:557.90px">South</div>
<div class="t" style="left:0;width:28px;text-align:center;top:161.50px">1</div>
<div class="t" style="left:0;width:28px;text-align:center;top:181.32px">2</div>
<div class="t" style="left:0;width:28px;text-align:center;top:201.14px">3</div>
<div class="t" style="left:0;width:28px;text-align:center;top:220.96px">4</div>
<div class="t" style="left:0;width:28px;text-align:center;top:240.78px">5</div>
<div class="t" style="left:0;width:28px;text-align:center;top:260.60px">6</div>
<div class="t" style="left:0;width:28px;text-align:center;top:280.42px">7</div>
<div class="t" style="left:0;width:28px;text-align:center;top:300.24px">8</div>
<div class="t" style="left:0;width:28px;text-align:center;top:320.06px">9</div>
<div class="t" style="left:0;width:28px;text-align:center;top:339.88px">10</div>
<div class="t" style="left:0;width:28px;text-align:center;top:359.70px">11</div>
<div class="t" style="left:0;width:28px;text-align:center;top:379.52px">12</div>
<div class="t" style="left:0;width:28px;text-align:center;top:399.34px">13</div>
<div class="t" style="left:0;width:28px;text-align:center;top:419.16px">14</div>
<div class="t" style="left:0;width:28px;text-align:center;top:438.98px">15</div>
<div class="t" style="left:0;width:28px;text-align:center;top:458.80px">16</div>
<div class="t" style="left:0;width:28px;text-align:center;top:478.62px">17</div>
<div class="t" style="left:0;width:28px;text-align:center;top:498.44px">18</div>
<div class="t" style="left:0;width:28px;text-align:center;top:518.26px">19</div>
<div class="t" style="left:0;width:28px;text-align:center;top:538.08px">20</div>
<div class="t" style="left:0;width:28px;text-align:center;top:557.90px">21</div>
<div class="t" style="left:0;width:28px;text-align:center;top:577.72px">22</div>
<div class="a" style="left:28px;top:568px;width:972px;height:15px;background:#f0f0f0"></div>
<div class="a" style="left:60px;top:568px;width:832px;height:14px;background:#c8c8c8"></div>
<svg class="a" style="left:0;top:560px" width="60" height="30" viewBox="0 560 60 30"><path d="M53 570.2 L49.4 570.2 L44.6 575.5 L49.4 580.8 L53 580.8 L48.2 575.5 Z" fill="#333"/></svg>
<svg class="a" style="left:950px;top:560px" width="50" height="30" viewBox="950 560 50 30"><path d="M974 570.2 L977.6 570.2 L982.8 575.5 L977.6 580.8 L974 580.8 L979.2 575.5 Z" fill="#333"/></svg>
<div class="a" style="left:0;top:583px;width:1000px;height:7px;background:#1f6e3e"></div>
</body></html>
